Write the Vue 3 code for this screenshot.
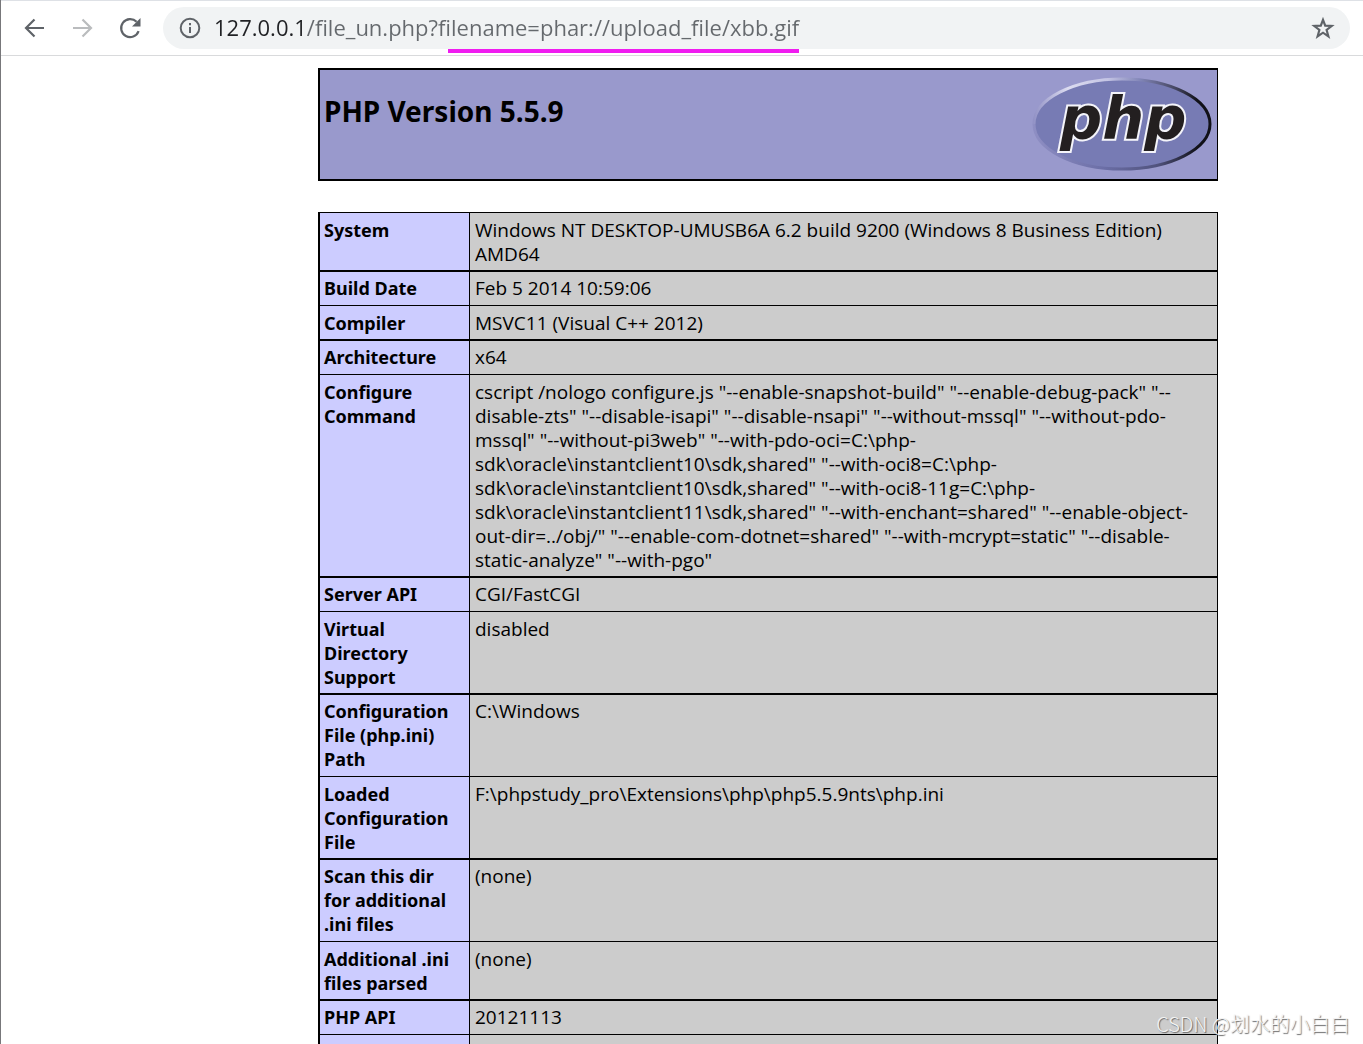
<script setup>
import { ref } from 'vue'

const address = ref('127.0.0.1/file_un.php?filename=phar://upload_file/xbb.gif')

const rows = [
  ['System', 'Windows NT DESKTOP-UMUSB6A 6.2 build 9200 (Windows 8 Business Edition)\nAMD64'],
  ['Build Date', 'Feb 5 2014 10:59:06'],
  ['Compiler', 'MSVC11 (Visual C++ 2012)'],
  ['Architecture', 'x64'],
  [
    'Configure\nCommand',
    [
      'cscript /nologo configure.js "--enable-snapshot-build" "--enable-debug-pack" "--',
      'disable-zts" "--disable-isapi" "--disable-nsapi" "--without-mssql" "--without-pdo-',
      'mssql" "--without-pi3web" "--with-pdo-oci=C:\\php-',
      'sdk\\oracle\\instantclient10\\sdk,shared" "--with-oci8=C:\\php-',
      'sdk\\oracle\\instantclient10\\sdk,shared" "--with-oci8-11g=C:\\php-',
      'sdk\\oracle\\instantclient11\\sdk,shared" "--with-enchant=shared" "--enable-object-',
      'out-dir=../obj/" "--enable-com-dotnet=shared" "--with-mcrypt=static" "--disable-',
      'static-analyze" "--with-pgo"',
    ].join('\n'),
  ],
  ['Server API', 'CGI/FastCGI'],
  ['Virtual\nDirectory\nSupport', 'disabled'],
  ['Configuration\nFile (php.ini)\nPath', 'C:\\Windows'],
  ['Loaded\nConfiguration\nFile', 'F:\\phpstudy_pro\\Extensions\\php\\php5.5.9nts\\php.ini'],
  ['Scan this dir\nfor additional\n.ini files', '(none)'],
  ['Additional .ini\nfiles parsed', '(none)'],
  ['PHP API', '20121113'],
  ['', ''],
]
</script>

<template>
  <div class="window">
    <header class="toolbar">
      <button class="nav" type="button" aria-label="Back">
        <svg viewBox="0 0 24 24"><path d="M22 12H4M12.500 3.500L4 12l8.500 8.500" /></svg>
      </button>
      <button class="nav" type="button" aria-label="Forward" disabled>
        <svg viewBox="0 0 24 24"><path d="M3 12h18M12.500 3.500L21 12l-8.500 8.500" /></svg>
      </button>
      <button class="nav" type="button" aria-label="Reload">
        <svg viewBox="0 0 24 24">
          <path d="M20.6 15.2A9 9 0 1 1 18.6 5.800" />
          <path class="solid" d="M22.500 2v8.500H14z" />
        </svg>
      </button>
      <div class="omnibox">
        <svg class="info" viewBox="0 0 22 22">
          <circle cx="11" cy="11" r="9.3" />
          <path d="M11 10v6M11 6v2.2" />
        </svg>
        <input v-model="address" class="address" type="text" aria-label="Address" spellcheck="false" />
        <button class="star" type="button" aria-label="Bookmark this page">
          <svg viewBox="0 0 24 24">
            <path d="M12 3.800l2.200 5.900 6.500.3-5.100 4 1.800 6.300-5.400-3.600-5.400 3.600 1.800-6.300-5.100-4 6.500-.3z" />
          </svg>
        </button>
        <span class="marker"></span>
      </div>
    </header>

    <main class="page">
      <section class="banner">
        <h1>PHP Version 5.5.9</h1>
        <svg class="logo" viewBox="0 0 180 94" role="img" aria-label="PHP logo">
          <defs>
            <linearGradient id="rim" gradientUnits="userSpaceOnUse" x1="0" y1="0" x2="180" y2="0">
              <stop offset="0" stop-color="#8f8fc4" />
              <stop offset="0.2" stop-color="#dcdcf0" />
              <stop offset="0.42" stop-color="#c4c4e4" />
              <stop offset="0.6" stop-color="#8286b8" />
              <stop offset="0.8" stop-color="#44455f" />
              <stop offset="0.92" stop-color="#111118" />
            </linearGradient>
            <linearGradient id="shade" gradientUnits="userSpaceOnUse" x1="0" y1="0" x2="180" y2="0">
              <stop offset="0" stop-color="#8f8fc4" />
              <stop offset="0.4" stop-color="#6b6ea6" />
              <stop offset="0.7" stop-color="#50527c" />
              <stop offset="0.92" stop-color="#111118" />
            </linearGradient>
          </defs>
          <ellipse cx="90" cy="47" rx="88" ry="45" fill="#777bb4" />
          <path d="M2 47A88 45 0 0 1 178 47" fill="none" stroke="url(#rim)" stroke-width="3" />
          <path d="M2 47A88 45 0 0 0 178 47" fill="none" stroke="url(#shade)" stroke-width="3" />
          <text class="wordmark" x="28" y="62">php</text>
        </svg>
      </section>

      <table class="info-table">
        <tbody>
          <tr v-for="(row, i) in rows" :key="i">
            <th scope="row">{{ row[0] }}</th>
            <td>{{ row[1] }}</td>
          </tr>
        </tbody>
      </table>
    </main>

    <div class="watermark">CSDN @划水的小白白</div>
  </div>
</template>

<style>
body {
  margin: 0;
  background: #fff;
}
</style>

<style scoped>
.window {
  position: relative;
  box-sizing: border-box;
  height: 100vh;
  overflow: hidden;
  border-left: 1px solid #77777a;
  background: #fff;
  color: #000;
  font-family: "Noto Sans", "Open Sans", sans-serif;
}
.toolbar {
  display: flex;
  align-items: center;
  box-sizing: border-box;
  height: 56px;
  padding: 0 13px 0 21px;
  border-top: 1px solid #dee1e6;
  border-bottom: 1px solid #d9dadc;
}
.nav,
.star {
  padding: 0;
  border: 0;
  background: none;
  color: #5f6368;
}
.nav {
  width: 24px;
  height: 24px;
  margin-right: 24px;
}
.nav:disabled {
  color: #babcbe;
}
.nav svg,
.star svg {
  display: block;
  width: 24px;
  height: 24px;
  fill: none;
  stroke: currentColor;
  stroke-width: 2.2;
}
.nav .solid {
  fill: currentColor;
  stroke: none;
}
.omnibox {
  position: relative;
  display: flex;
  flex: 1;
  align-items: center;
  height: 42px;
  margin-left: -3px;
  padding: 0 15px 0 16px;
  border-radius: 21px;
  background: #f1f3f4;
}
.info {
  width: 22px;
  height: 22px;
  margin-right: 13px;
  fill: none;
  stroke: #5f6368;
  stroke-width: 2;
}
.address {
  flex: 1;
  min-width: 0;
  height: 36px;
  margin-bottom: 2px;
  padding: 0;
  border: 0;
  outline: 0;
  background: linear-gradient(to right, #202124 90px, #65696d 90px);
  background-clip: text;
  color: transparent;
  font: 22px/36px "Open Sans", "Noto Sans", sans-serif;
}
.marker {
  position: absolute;
  top: 42px;
  left: 285px;
  width: 351px;
  height: 4px;
  background: #f01cf0;
}
.page {
  padding: 12px 145px 0 317px;
}
.banner {
  display: flex;
  justify-content: space-between;
  box-sizing: border-box;
  height: 113px;
  padding: 7px 5px 0 4px;
  border: solid #000;
  border-width: 2px 1px 2px 2px;
  background: #9999cc;
}
h1 {
  margin: 14px 0 0;
  font-size: 28px;
  line-height: 40px;
}
.logo {
  width: 180px;
  height: 94px;
}
.wordmark {
  fill: #231f20;
  stroke: #f4f4fa;
  stroke-width: 4px;
  paint-order: stroke;
  font: italic bold 59px "DejaVu Sans", sans-serif;
}
.info-table {
  width: 100%;
  margin-top: 31px;
  border: solid #000;
  border-width: 1px 1px 0 2px;
  border-spacing: 0;
  table-layout: fixed;
  font-size: 18px;
  line-height: 24px;
}
th,
td {
  height: 24px;
  padding: 4px 4px 5px;
  border-bottom: 1px solid #000;
  text-align: left;
  vertical-align: top;
  white-space: pre;
}
tr:nth-child(odd) > * {
  padding-top: 5px;
  padding-bottom: 4px;
  border-bottom-width: 2px;
}
th {
  width: 141px;
  border-right: 1px solid #000;
  background: #ccccff;
}
td {
  padding-left: 5px;
  background: #cccccc;
  font-family: "Open Sans", "Noto Sans", sans-serif;
  font-size: 19px;
}
.watermark {
  position: absolute;
  right: 13px;
  bottom: 5px;
  color: #f4f4f4;
  font: 300 20px/30px "Noto Sans CJK SC", sans-serif;
  text-shadow: 1px 1px 1px #666;
}
</style>
